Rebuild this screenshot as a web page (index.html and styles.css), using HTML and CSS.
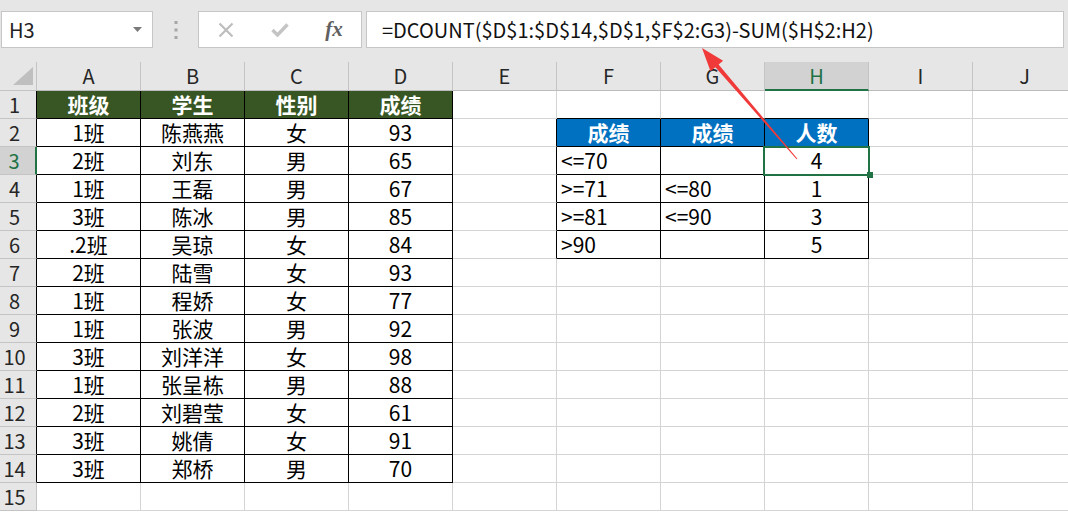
FILE: index.html
```html
<!DOCTYPE html>
<html lang="zh-CN">
<head>
<meta charset="utf-8">
<title>DCOUNT</title>
<link rel="stylesheet" href="styles.css">
</head>
<body>
<div class="app">
  <div class="toolbar">
    <div class="namebox"><span>H3</span>
      <svg class="dd" width="9" height="5" viewBox="0 0 9 5"><polygon points="0,0 9,0 4.5,5" fill="#7a7a7a"/></svg>
    </div>
    <div class="sep">
      <svg width="4" height="20" viewBox="0 0 4 20"><rect x="0.5" y="1" width="3" height="3" fill="#a6a6a6"/><rect x="0.5" y="8.5" width="3" height="3" fill="#a6a6a6"/><rect x="0.5" y="16" width="3" height="3" fill="#a6a6a6"/></svg>
    </div>
    <div class="fxbox">
      <span class="slot"><svg width="16" height="16" viewBox="0 0 16 16"><path d="M1.5 1.5 L14.5 14.5 M14.5 1.5 L1.5 14.5" stroke="#bdbdbd" stroke-width="2.2" fill="none"/></svg></span>
      <span class="slot"><svg width="18" height="14" viewBox="0 0 18 14"><path d="M1.5 7 L6.5 12 L16.5 1.5" stroke="#c4c4c4" stroke-width="3.4" fill="none"/></svg></span>
      <span class="slot fx">fx</span>
    </div>
    <div class="formula">=DCOUNT($D$1:$D$14,$D$1,$F$2:G3)-SUM($H$2:H2)</div>
  </div>

  <div class="sheet">
    <div class="c corner"><svg width="36" height="28" viewBox="0 0 36 28"><polygon points="33,5 33,23 13,23" fill="#bfbfbf"/></svg></div>
    <div class="c ch">A</div><div class="c ch">B</div><div class="c ch">C</div><div class="c ch">D</div><div class="c ch">E</div><div class="c ch">F</div><div class="c ch">G</div><div class="c ch selc">H</div><div class="c ch">I</div><div class="c ch">J</div>

    <div class="c rh tl">1</div>
    <div class="c t gh">班级</div><div class="c t gh">学生</div><div class="c t gh">性别</div><div class="c t gh">成绩</div>
    <div class="c"></div><div class="c tt"></div><div class="c tt"></div><div class="c tt"></div><div class="c"></div><div class="c"></div>

    <div class="c rh tl">2</div>
    <div class="c t">1班</div><div class="c t">陈燕燕</div><div class="c t">女</div><div class="c t">93</div>
    <div class="c tl"></div><div class="c t bh">成绩</div><div class="c t bh">成绩</div><div class="c t bh">人数</div><div class="c"></div><div class="c"></div>

    <div class="c rh tl selr">3</div>
    <div class="c t">2班</div><div class="c t">刘东</div><div class="c t">男</div><div class="c t">65</div>
    <div class="c tl"></div><div class="c t l">&lt;=70</div><div class="c t"></div><div class="c t sel">4</div><div class="c"></div><div class="c"></div>

    <div class="c rh tl">4</div>
    <div class="c t">1班</div><div class="c t">王磊</div><div class="c t">男</div><div class="c t">67</div>
    <div class="c tl"></div><div class="c t l">&gt;=71</div><div class="c t l">&lt;=80</div><div class="c t">1</div><div class="c"></div><div class="c"></div>

    <div class="c rh tl">5</div>
    <div class="c t">3班</div><div class="c t">陈冰</div><div class="c t">男</div><div class="c t">85</div>
    <div class="c tl"></div><div class="c t l">&gt;=81</div><div class="c t l">&lt;=90</div><div class="c t">3</div><div class="c"></div><div class="c"></div>

    <div class="c rh tl">6</div>
    <div class="c t">.2班</div><div class="c t">吴琼</div><div class="c t">女</div><div class="c t">84</div>
    <div class="c tl"></div><div class="c t l">&gt;90</div><div class="c t"></div><div class="c t">5</div><div class="c"></div><div class="c"></div>

    <div class="c rh tl">7</div>
    <div class="c t">2班</div><div class="c t">陆雪</div><div class="c t">女</div><div class="c t">93</div>
    <div class="c"></div><div class="c"></div><div class="c"></div><div class="c"></div><div class="c"></div><div class="c"></div>

    <div class="c rh tl">8</div>
    <div class="c t">1班</div><div class="c t">程娇</div><div class="c t">女</div><div class="c t">77</div>
    <div class="c"></div><div class="c"></div><div class="c"></div><div class="c"></div><div class="c"></div><div class="c"></div>

    <div class="c rh tl">9</div>
    <div class="c t">1班</div><div class="c t">张波</div><div class="c t">男</div><div class="c t">92</div>
    <div class="c"></div><div class="c"></div><div class="c"></div><div class="c"></div><div class="c"></div><div class="c"></div>

    <div class="c rh tl">10</div>
    <div class="c t">3班</div><div class="c t">刘洋洋</div><div class="c t">女</div><div class="c t">98</div>
    <div class="c"></div><div class="c"></div><div class="c"></div><div class="c"></div><div class="c"></div><div class="c"></div>

    <div class="c rh tl">11</div>
    <div class="c t">1班</div><div class="c t">张呈栋</div><div class="c t">男</div><div class="c t">88</div>
    <div class="c"></div><div class="c"></div><div class="c"></div><div class="c"></div><div class="c"></div><div class="c"></div>

    <div class="c rh tl">12</div>
    <div class="c t">2班</div><div class="c t">刘碧莹</div><div class="c t">女</div><div class="c t">61</div>
    <div class="c"></div><div class="c"></div><div class="c"></div><div class="c"></div><div class="c"></div><div class="c"></div>

    <div class="c rh tl">13</div>
    <div class="c t">3班</div><div class="c t">姚倩</div><div class="c t">女</div><div class="c t">91</div>
    <div class="c"></div><div class="c"></div><div class="c"></div><div class="c"></div><div class="c"></div><div class="c"></div>

    <div class="c rh tl">14</div>
    <div class="c t">3班</div><div class="c t">郑桥</div><div class="c t">男</div><div class="c t">70</div>
    <div class="c"></div><div class="c"></div><div class="c"></div><div class="c"></div><div class="c"></div><div class="c"></div>

    <div class="c rh">15</div>
    <div class="c"></div><div class="c"></div><div class="c"></div><div class="c"></div><div class="c"></div><div class="c"></div><div class="c"></div><div class="c"></div><div class="c"></div><div class="c"></div>
  </div>

  <svg class="arrow" width="1068" height="512" viewBox="0 0 1068 512">
    <polygon points="702,48 723.1,60.8 718.6,64.5 797.4,158.7 796.6,159.3 715.4,67.3 710.5,71.3" fill="#f03a3a"/>
  </svg>
</div>
</body>
</html>
```

FILE: styles.css
```css
* { box-sizing: border-box; }
html, body { margin: 0; padding: 0; }
body {
  background: #fff;
  font-family: "Noto Sans CJK SC", sans-serif;
}
.app {
  position: relative;
  width: 1068px;
  height: 512px;
  overflow: hidden;
  background: #fff;
}

/* formula bar */
.toolbar {
  height: 62px;
  background: #e6e6e6;
  display: flex;
  align-items: flex-start;
  padding: 11px 4px 0 1px;
}
.namebox {
  width: 152px;
  height: 37px;
  background: #fff;
  border: 1px solid #c6c6c6;
  display: flex;
  align-items: center;
  justify-content: space-between;
  padding: 0 10px 0 7px;
  font-size: 20px;
  line-height: 1;
  color: #222;
}
.sep {
  width: 45px;
  height: 37px;
  display: flex;
  align-items: center;
  justify-content: center;
}
.fxbox {
  width: 164px;
  height: 37px;
  background: #fff;
  border: 1px solid #c6c6c6;
  display: flex;
  align-items: center;
}
.slot {
  width: 54px;
  display: flex;
  justify-content: center;
  align-items: center;
}
.fx {
  font-family: "Liberation Serif", serif;
  font-style: italic;
  font-weight: bold;
  font-size: 21px;
  color: #606060;
  line-height: 1;
}
.formula {
  flex: 1;
  margin-left: 4px;
  height: 37px;
  background: #fff;
  border: 1px solid #c6c6c6;
  padding-left: 15px;
  display: flex;
  align-items: center;
  font-size: 20px;
  line-height: 1;
  color: #111;
  white-space: nowrap;
}

/* sheet grid */
.sheet {
  display: grid;
  grid-template-columns: 37px repeat(10, 104px);
  grid-template-rows: 29px;
  grid-auto-rows: 28px;
  width: 1077px;
}
.c {
  border-right: 1px solid #d4d4d4;
  border-bottom: 1px solid #d4d4d4;
  display: flex;
  align-items: center;
  justify-content: center;
  font-size: 21px;
  line-height: 1;
  color: #000;
  white-space: nowrap;
}
.corner, .ch, .rh {
  background: #e6e6e6;
  border-color: #c4c4c4;
  color: #262626;
}
.corner { display: block; }
.corner svg { display: block; }
.ch { font-size: 20px; border-bottom-color: #bcbcbc; }
.rh { padding-right: 7px; font-size: 20px; }
.selc {
  background: #d2d2d2;
  color: #217346;
  border-bottom: 2px solid #217346;
}
.selr {
  background: #d2d2d2;
  color: #217346;
  border-right: 2px solid #217346;
}

.t { border-right-color: #000; border-bottom-color: #000; }
.tl { border-right-color: #000; }
.tt { border-bottom-color: #000; }
.selr.tl { border-right-color: #217346; }

.gh { background: #375623; color: #fff; font-weight: bold; }
.bh { background: #0070c0; color: #fff; font-weight: bold; }
.l { justify-content: flex-start; padding-left: 4px; }

.sel { position: relative; }
.sel::after {
  content: "";
  position: absolute;
  left: -2px;
  top: -1px;
  right: -2px;
  bottom: -2px;
  border: 2px solid #217346;
}
.sel::before {
  content: "";
  position: absolute;
  right: -5px;
  bottom: -4px;
  width: 6px;
  height: 6px;
  background: #217346;
  z-index: 2;
}

.arrow {
  position: absolute;
  left: 0;
  top: 0;
  pointer-events: none;
}
```
